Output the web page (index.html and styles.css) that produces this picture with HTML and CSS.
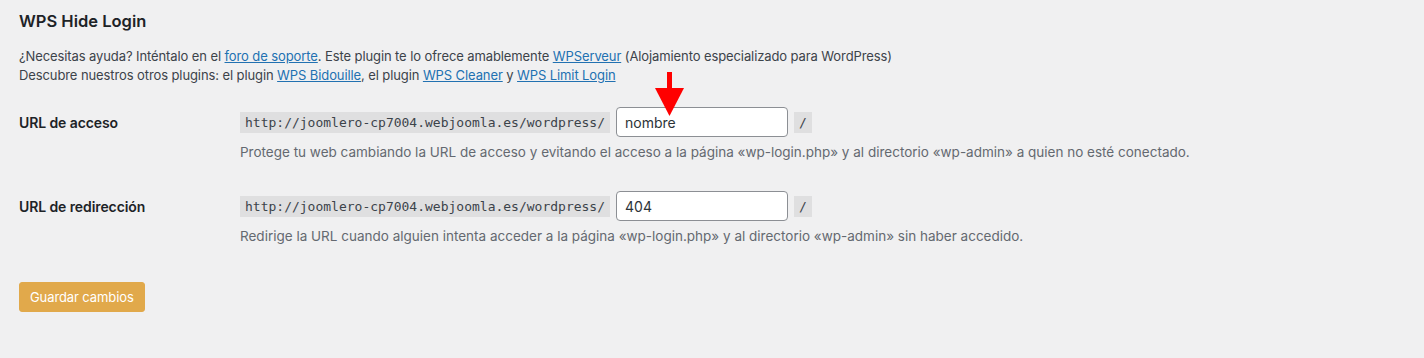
FILE: index.html
```html
<!DOCTYPE html>
<html lang="es">
<head>
<meta charset="utf-8">
<title>WPS Hide Login</title>
<link rel="stylesheet" href="styles.css">
</head>
<body>
<div class="wrap">
  <h2 class="title">WPS Hide Login</h2>
  <p class="intro">¿Necesitas ayuda? Inténtalo en el <a href="#">foro de soporte</a>. Este plugin te lo ofrece amablemente <a href="#">WPServeur</a> (Alojamiento especializado para WordPress)<br>Descubre nuestros otros plugins: el plugin <a href="#">WPS Bidouille</a>, el plugin <a href="#">WPS Cleaner</a> y <a href="#">WPS Limit Login</a></p>

  <div class="form-table">
    <div class="row">
      <div class="label">URL de acceso</div>
      <div class="field">
        <div class="line">
          <code>http://joomlero-cp7004.webjoomla.es/wordpress/</code>
          <span class="input-wrap">
            <input type="text" value="nombre">
            <svg class="arrow" width="30" height="46" viewBox="0 0 30 46" aria-hidden="true">
              <rect x="12" y="0" width="5" height="18" fill="#ff0000"/>
              <polygon points="0,16 29,16 14.5,44" fill="#ff0000"/>
            </svg>
          </span>
          <code>/</code>
        </div>
        <p class="description">Protege tu web cambiando la URL de acceso y evitando el acceso a la página «wp-login.php» y al directorio «wp-admin» a quien no esté conectado.</p>
      </div>
    </div>
    <div class="row">
      <div class="label">URL de redirección</div>
      <div class="field">
        <div class="line">
          <code>http://joomlero-cp7004.webjoomla.es/wordpress/</code>
          <span class="input-wrap"><input type="text" value="404"></span>
          <code>/</code>
        </div>
        <p class="description">Redirige la URL cuando alguien intenta acceder a la página «wp-login.php» y al directorio «wp-admin» sin haber accedido.</p>
      </div>
    </div>
  </div>

  <div class="submit"><button type="button" class="button-primary">Guardar cambios</button></div>
</div>
</body>
</html>
```

FILE: styles.css
```css
html, body {
  margin: 0;
  padding: 0;
  background: #f0f0f1;
}
body {
  font-family: Inter, "Noto Sans", "Liberation Sans", sans-serif;
  font-size: 13px;
  line-height: 1.5;
  color: #3c434a;
}
.wrap {
  padding: 10px 19px 0 19px;
}
.title {
  margin: 0;
  font-size: 16.5px;
  line-height: 23px;
  font-weight: 600;
  color: #1d2327;
}
.intro {
  margin: 14px 0 0 0;
  line-height: 19px;
  letter-spacing: -0.1px;
}
a {
  color: #2271b1;
  text-decoration: underline;
}
.form-table {
  margin-top: 7px;
}
.row {
  display: flex;
  align-items: flex-start;
}
.label {
  width: 221px;
  flex: none;
  padding: 20.5px 0;
  font-size: 14px;
  font-weight: 600;
  line-height: 20px;
  color: #1d2327;
  letter-spacing: -0.1px;
}
.field {
  padding: 15px 0 14px;
}
.line {
  display: flex;
  align-items: center;
  gap: 6px;
  height: 30px;
}
code {
  font-family: "DejaVu Sans Mono", "Liberation Mono", monospace;
  font-size: 13px;
  line-height: 16px;
  padding: 3px 5px 2px;
  background: rgba(0, 0, 0, 0.07);
  color: #3c434a;
}
.input-wrap {
  position: relative;
  display: block;
}
input[type="text"] {
  display: block;
  box-sizing: border-box;
  width: 172px;
  height: 30px;
  margin: 0;
  padding: 0 8px;
  border: 1px solid #8c8f94;
  border-radius: 4px;
  background: #fff;
  font-family: Inter, "Noto Sans", "Liberation Sans", sans-serif;
  font-size: 14px;
  color: #2c3338;
  outline: none;
}
.arrow {
  position: absolute;
  left: 39px;
  top: -35px;
}
.description {
  margin: 5px 0 0 0;
  font-size: 13.5px;
  line-height: 20px;
  color: #646970;
}
.submit {
  padding-top: 22px;
}
.button-primary {
  display: block;
  box-sizing: border-box;
  height: 30px;
  padding: 0 10px;
  border: 1px solid #e1a94b;
  border-radius: 3px;
  background: #e1a94b;
  color: #fff;
  font-family: Inter, "Noto Sans", "Liberation Sans", sans-serif;
  font-size: 13px;
  line-height: 28px;
  letter-spacing: -0.1px;
  cursor: pointer;
}
```
